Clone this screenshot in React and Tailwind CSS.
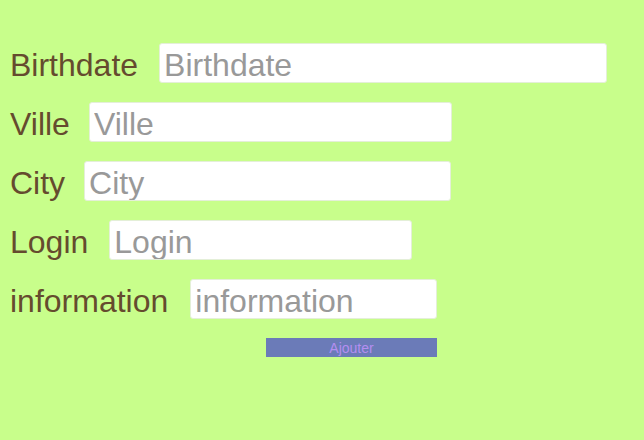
import React from "react";

const fields = [
  { name: "Birthdate", width: "w-[448px]", gap: "gap-[21px]" },
  { name: "Ville", width: "w-[363px]", gap: "gap-[19px]" },
  { name: "City", width: "w-[367px]", gap: "gap-[19px]" },
  { name: "Login", width: "w-[303px]", gap: "gap-[21px]" },
  { name: "information", width: "w-[247px]", gap: "gap-[22px]" },
];

const App = () => {
  return (
    <div className="min-h-screen w-full bg-[#c8fe8b] px-[10px] pt-[43px] font-['Liberation_Sans',Arial,sans-serif]">
      <form onSubmit={(e) => e.preventDefault()}>
        {fields.map((f) => (
          <div key={f.name} className={`mb-[19px] flex h-[40px] items-center ${f.gap}`}>
            <label className="mt-[4px] text-[32px] leading-none text-[#654b2e]">{f.name}</label>
            <input
              type="text"
              placeholder={f.name}
              className={`${f.width} h-[40px] rounded-[3px] border border-[#e4efd8] bg-white px-[4px] pt-[4px] pb-0 text-[32px] text-[#333] outline-none placeholder:text-[#999]`}
            />
          </div>
        ))}
        <div className="flex pl-[256px]">
          <button
            type="submit"
            className="h-[19px] w-[171px] bg-[#6b7bb8] text-[14px] leading-none text-[#b48ef0]"
          >
            Ajouter
          </button>
        </div>
      </form>
    </div>
  );
};

export default App;
